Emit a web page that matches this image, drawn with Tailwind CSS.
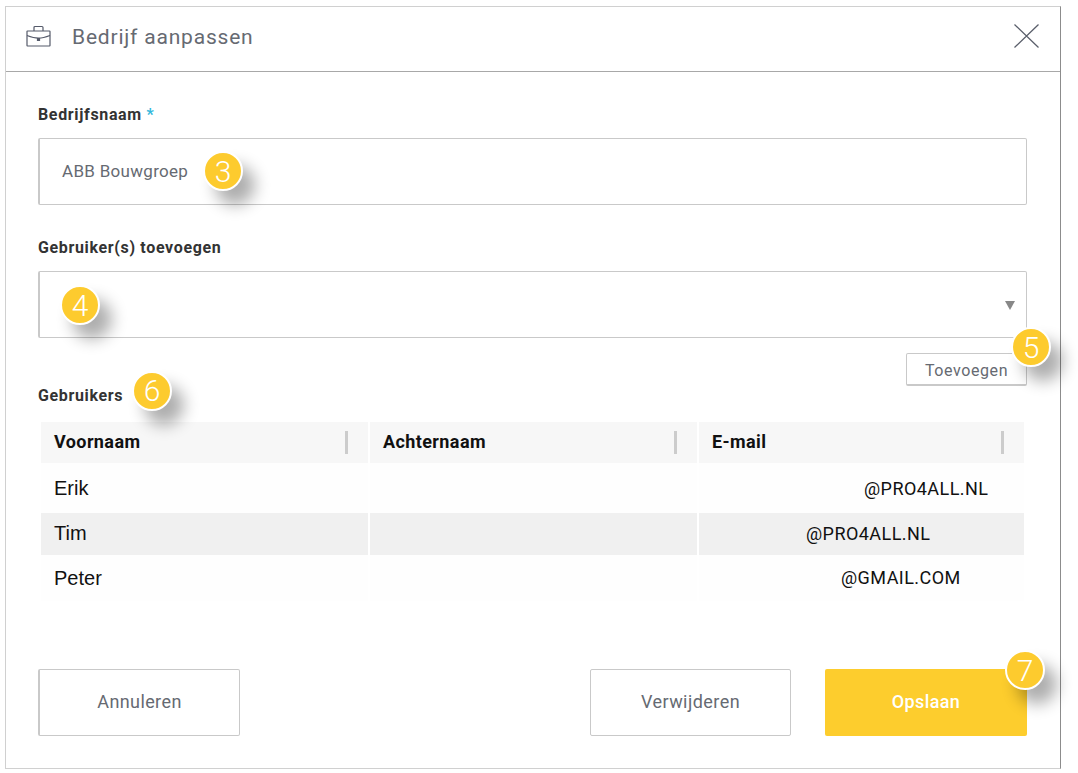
<!DOCTYPE html>
<html lang="en">
<head>
    <meta charset="UTF-8">
    <meta name="viewport" content="width=device-width, initial-scale=1.0">
    <title>Bedrijf aanpassen</title>
    <script src="https://cdn.jsdelivr.net/npm/@tailwindcss/browser@4"></script>
</head>
<body class="bg-white font-['Roboto',sans-serif] overflow-hidden">
    <div class="pt-[6px] pl-[5px]">
        <div class="w-[1056px] h-[763px] flex flex-col bg-white border border-[#d0d0d0] border-r-[#8c8c8c]">

            <!-- header -->
            <div class="h-[65px] shrink-0 flex items-center border-b border-[#a8a8a8] pl-[20px] pr-[21px] pb-[5px]">
                <svg class="w-[26px] h-[24px] text-[#555a6a]" viewBox="0 0 26 24" fill="none" stroke="currentColor" stroke-width="1.2">
                    <rect x="1" y="6" width="23" height="15" rx="0.5"/>
                    <path d="M8 6V2.5a1 1 0 0 1 1-1h7a1 1 0 0 1 1 1V6"/>
                    <path d="M1 10.5c4 1.5 8 2.6 11.5 2.6S20 12 24 10.5"/>
                    <path d="M11.5 13.5h2v2h-2z" fill="currentColor"/>
                </svg>
                <span class="ml-[20px] mt-[2px] text-[21px] tracking-[0.8px] text-[#666a72]">Bedrijf aanpassen</span>
                <svg class="ml-auto mb-[2px] w-[25px] h-[24px] text-[#5a5f6b]" viewBox="0 0 25 24" fill="none" stroke="currentColor" stroke-width="1.3">
                    <path d="M0.5 0.5l24 23M24.5 0.5l-24 23"/>
                </svg>
            </div>

            <!-- form -->
            <div class="flex-1 flex flex-col pl-[32px] pr-[33px] pb-[32px] pt-[32px]">
                <label class="h-[20px] pt-[1px] leading-[20px] text-[16px] tracking-[0.65px] font-bold text-[#333]">Bedrijfsnaam <span class="text-[#35b8dc]">*</span></label>
                <div class="relative mt-[14px] h-[67px] flex items-center border border-[#c9c9c9] border-l-2 rounded-[2px] pl-[22px] text-[17px] tracking-[0.3px] text-[#666a72]">
                    ABB Bouwgroep
                    <span class="absolute left-[163px] top-[12px] w-[40px] h-[40px] rounded-full bg-[#fdcb2e] border-2 border-white text-white text-[30px] tracking-normal font-light flex items-center justify-center shadow-[12px_14px_16px_rgba(0,0,0,0.32)]">3</span>
                </div>

                <label class="mt-[32px] h-[20px] pt-[1px] leading-[20px] text-[16px] tracking-[0.65px] font-bold text-[#333]">Gebruiker(s) toevoegen</label>
                <div class="relative mt-[14px] h-[67px] border border-[#c9c9c9] border-l-2 rounded-[2px]">
                    <span class="absolute left-[20px] top-[13px] w-[40px] h-[40px] rounded-full bg-[#fdcb2e] border-2 border-white text-white text-[30px] font-light flex items-center justify-center shadow-[12px_14px_16px_rgba(0,0,0,0.32)]">4</span>
                    <svg class="absolute right-[11px] top-[29px] w-[10px] h-[9px]" viewBox="0 0 10 9"><path d="M0 0h10L5 9z" fill="#888"/></svg>
                </div>

                <div class="mt-[15px] h-[52px] flex justify-between">
                    <div class="relative self-end h-[20px] pt-[1px] leading-[20px] text-[16px] tracking-[0.65px] font-bold text-[#333]">
                        Gebruikers
                        <span class="absolute left-[94px] top-[-14px] w-[40px] h-[40px] rounded-full bg-[#fdcb2e] border-2 border-white text-white text-[30px] tracking-normal font-light flex items-center justify-center shadow-[12px_14px_16px_rgba(0,0,0,0.32)]">6</span>
                    </div>
                    <div class="relative w-[121px] h-[33px] flex items-center justify-center border border-[#c9c9c9] border-b-2 rounded-[2px] pt-[3px] text-[16px] tracking-[0.6px] text-[#666a72]">
                        Toevoegen
                        <span class="absolute left-[104px] top-[-27px] w-[40px] h-[40px] rounded-full bg-[#fdcb2e] border-2 border-white text-white text-[30px] tracking-normal font-light flex items-center justify-center shadow-[12px_14px_16px_rgba(0,0,0,0.32)]">5</span>
                    </div>
                </div>

                <!-- table -->
                <div class="mt-[17px] ml-[3px] grid grid-cols-[327px_327px_325px] gap-x-[2px] text-[#111]">
                    <div class="h-[41px] bg-[#f7f7f7] flex items-center justify-between pl-[13px] pr-[20px] text-[18px] tracking-[0.4px] font-bold"><span class="mb-[2px]">Voornaam</span><i class="w-[3px] h-[23px] bg-[#cccccc]"></i></div>
                    <div class="h-[41px] bg-[#f7f7f7] flex items-center justify-between pl-[13px] pr-[20px] text-[18px] tracking-[0.4px] font-bold"><span class="mb-[2px]">Achternaam</span><i class="w-[3px] h-[23px] bg-[#cccccc]"></i></div>
                    <div class="h-[41px] bg-[#f7f7f7] flex items-center justify-between pl-[13px] pr-[20px] text-[18px] tracking-[0.4px] font-bold"><span class="mb-[2px]">E-mail</span><i class="w-[3px] h-[23px] bg-[#cccccc]"></i></div>

                    <div class="h-[50px] bg-[#fefefe] flex items-center pl-[13px] text-[20px] font-['Liberation_Sans',sans-serif]">Erik</div>
                    <div class="h-[50px] bg-[#fefefe]"></div>
                    <div class="h-[50px] bg-[#fefefe] flex items-center pl-[165px] text-[18px] tracking-[0.45px]">@PRO4ALL.NL</div>

                    <div class="h-[42px] bg-[#f0f0f0] flex items-center pl-[13px] pb-[2px] text-[20px] font-['Liberation_Sans',sans-serif]">Tim</div>
                    <div class="h-[42px] bg-[#f0f0f0]"></div>
                    <div class="h-[42px] bg-[#f0f0f0] flex items-center pl-[107px] pb-[2px] text-[18px] tracking-[0.45px]">@PRO4ALL.NL</div>

                    <div class="h-[46px] bg-[#fefefe] flex items-center pl-[13px] text-[20px] font-['Liberation_Sans',sans-serif]">Peter</div>
                    <div class="h-[46px] bg-[#fefefe]"></div>
                    <div class="h-[46px] bg-[#fefefe] flex items-center pl-[142px] pb-[2px] text-[18px] tracking-[0.45px]">@GMAIL.COM</div>
                </div>

                <!-- footer -->
                <div class="mt-auto flex items-start">
                    <button class="w-[202px] h-[67px] pb-[2px] border border-[#c9c9c9] border-l-2 rounded-[2px] text-[18px] tracking-[0.4px] text-[#666a72]">Annuleren</button>
                    <button class="ml-auto w-[201px] h-[67px] pb-[2px] border border-[#c9c9c9] rounded-[2px] text-[18px] tracking-[0.45px] text-[#666a72]">Verwijderen</button>
                    <div class="relative ml-[34px]">
                        <button class="w-[202px] h-[67px] pb-[2px] bg-[#fdcd2d] rounded-[2px] text-[18px] tracking-[0.4px] font-medium text-white">Opslaan</button>
                        <span class="absolute left-[180px] top-[-19px] w-[40px] h-[40px] rounded-full bg-[#fdcb2e] border-2 border-white text-white text-[30px] font-light flex items-center justify-center shadow-[12px_14px_16px_rgba(0,0,0,0.32)]">7</span>
                    </div>
                </div>
            </div>
        </div>
    </div>
</body>
</html>
